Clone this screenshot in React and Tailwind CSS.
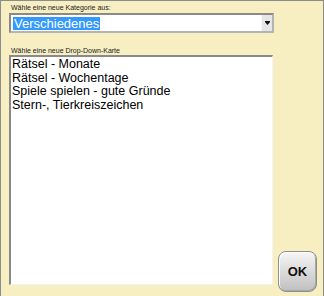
import React from "react";

export default function App() {
  const items = [
    "Rätsel - Monate",
    "Rätsel - Wochentage",
    "Spiele spielen - gute Gründe",
    "Stern-, Tierkreiszeichen",
  ];
  return (
    <div
      className="w-[324px] h-[296px] bg-[#f7efc2] border-t border-l border-r border-[#8c8c8c] pl-[8px] flex flex-col overflow-hidden"
      style={{ fontFamily: '"Liberation Sans", Arial, sans-serif' }}
    >
      <div className="text-[7px] leading-[9px] text-[#222] pt-[2px] pl-[2px]">
        Wähle eine neue Kategorie aus:
      </div>
      <div className="mt-[1px] w-[265px] h-[20px] flex bg-white border-t-2 border-l-2 border-t-[#8a8a8a] border-l-[#8a8a8a] border-r-2 border-b-2 border-r-[#b4b4b4] border-b-[#b4b4b4]">
        <div className="flex-1 flex items-center pl-[2px]">
          <span className="bg-[#3399ff] text-white text-[13px] leading-[13px] h-[13px] px-[1px] flex items-center">
            Verschiedenes
          </span>
        </div>
        <div className="w-[11px] bg-[#e6e6e6] border-l border-[#f8f8f8] flex items-center justify-center">
          <svg width="5" height="4" viewBox="0 0 5 4">
            <rect x="0" y="0" width="5" height="1" fill="#111" />
            <polygon points="0,1 5,1 2.5,4" fill="#111" />
          </svg>
        </div>
      </div>
      <div className="mt-[13px] text-[7px] leading-[9px] text-[#222] pl-[2px]">
        Wähle eine neue Drop-Down-Karte
      </div>
      <div className="flex h-[237px]">
        <div className="w-[264px] h-[230px] bg-white border-t-2 border-l-2 border-t-[#8a8a8a] border-l-[#8a8a8a] border-r border-b border-r-[#f4f4f4] border-b-[#f4f4f4] pl-[1px] pt-[1px] text-[12.5px] leading-[13.7px] text-black">
          {items.map((t) => (
            <div key={t} className="whitespace-nowrap">
              {t}
            </div>
          ))}
        </div>
        <div className="ml-[5px] self-end w-[39px] h-[41px] rounded-[8px] border border-[#8e8e8e] bg-gradient-to-b from-[#f6f6f6] to-[#c0c0c0] shadow-[inset_1px_1px_0_#ffffff,inset_-1px_-1px_0_#a8a8a8] flex items-center justify-center">
          <span className="text-[13px] font-bold text-[#111] leading-none">OK</span>
        </div>
      </div>
    </div>
  );
}
